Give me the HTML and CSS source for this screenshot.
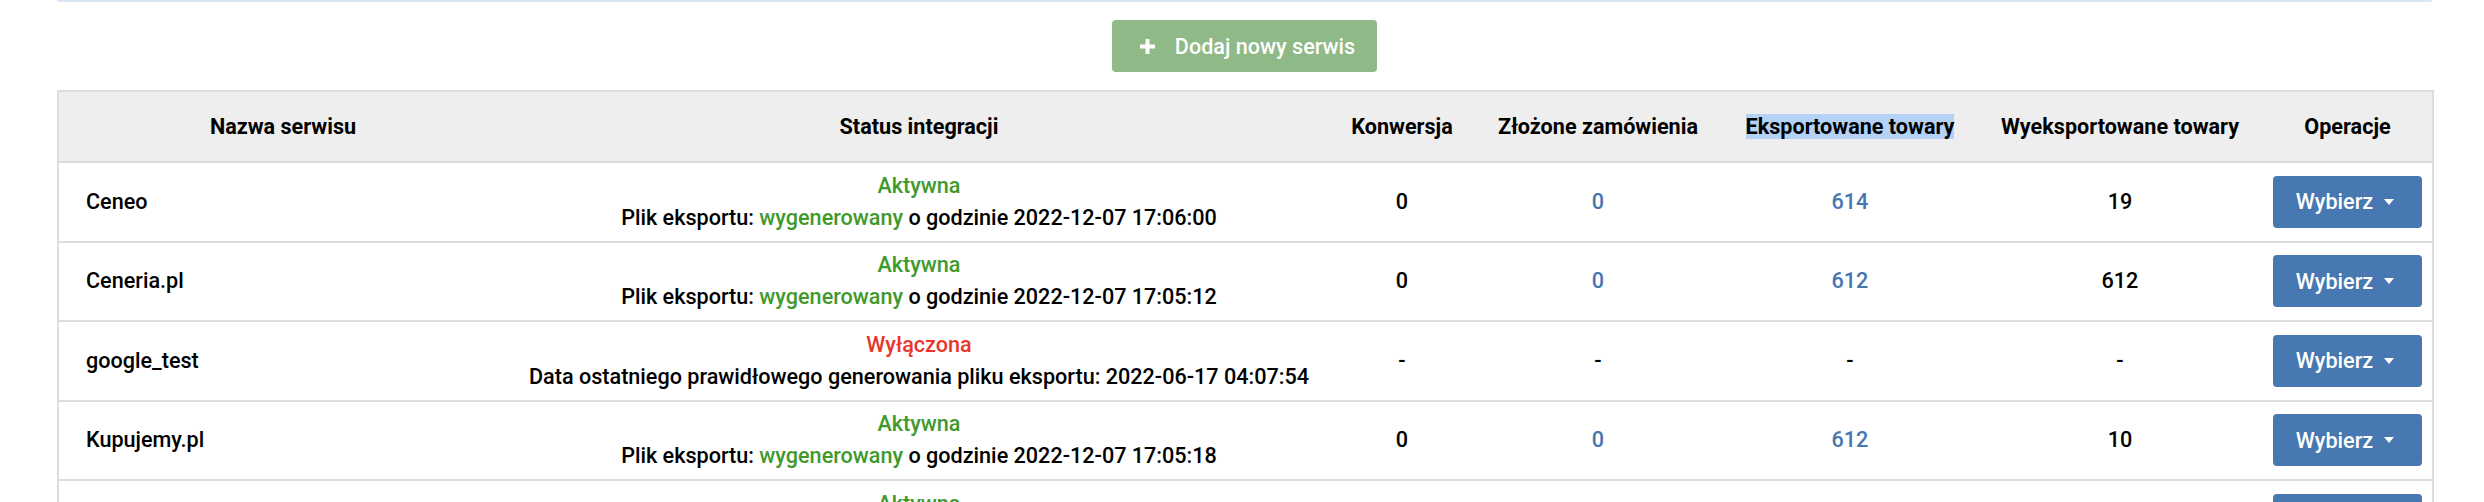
FILE: index.html
```html
<!DOCTYPE html>
<html lang="pl">
<head>
<meta charset="utf-8">
<title>Serwisy</title>
<link rel="stylesheet" href="styles.css">
</head>
<body>
<div class="page">
  <div class="panel-edge"></div>
  <div class="actions">
    <button class="btn-add" type="button">
      <svg class="plus" width="15" height="15" viewBox="0 0 15 15"><path d="M5.5 0h4v5.5H15v4H9.5V15h-4V9.5H0v-4h5.5z" fill="#fff"/></svg>
      <span>Dodaj nowy serwis</span>
    </button>
  </div>
  <table class="services">
    <colgroup>
      <col class="c-name"><col class="c-status"><col class="c-conv"><col class="c-orders"><col class="c-exp"><col class="c-done"><col class="c-ops">
    </colgroup>
    <thead>
      <tr>
        <th>Nazwa serwisu</th>
        <th>Status integracji</th>
        <th>Konwersja</th>
        <th>Złożone zamówienia</th>
        <th><span class="sel">Eksportowane towary</span></th>
        <th>Wyeksportowane towary</th>
        <th>Operacje</th>
      </tr>
    </thead>
    <tbody>
      <tr>
        <td class="name">Ceneo</td>
        <td class="status"><div class="ok">Aktywna</div><div>Plik eksportu: <span class="ok">wygenerowany</span> o godzinie 2022-12-07 17:06:00</div></td>
        <td>0</td><td class="link">0</td><td class="link">614</td><td>19</td>
        <td class="ops"><button class="btn-pick" type="button">Wybierz <span class="caret"></span></button></td>
      </tr>
      <tr>
        <td class="name">Ceneria.pl</td>
        <td class="status"><div class="ok">Aktywna</div><div>Plik eksportu: <span class="ok">wygenerowany</span> o godzinie 2022-12-07 17:05:12</div></td>
        <td>0</td><td class="link">0</td><td class="link">612</td><td>612</td>
        <td class="ops"><button class="btn-pick" type="button">Wybierz <span class="caret"></span></button></td>
      </tr>
      <tr>
        <td class="name">google_test</td>
        <td class="status"><div class="off">Wyłączona</div><div>Data ostatniego prawidłowego generowania pliku eksportu: 2022-06-17 04:07:54</div></td>
        <td>-</td><td>-</td><td>-</td><td>-</td>
        <td class="ops"><button class="btn-pick" type="button">Wybierz <span class="caret"></span></button></td>
      </tr>
      <tr>
        <td class="name">Kupujemy.pl</td>
        <td class="status"><div class="ok">Aktywna</div><div>Plik eksportu: <span class="ok">wygenerowany</span> o godzinie 2022-12-07 17:05:18</div></td>
        <td>0</td><td class="link">0</td><td class="link">612</td><td>10</td>
        <td class="ops"><button class="btn-pick" type="button">Wybierz <span class="caret"></span></button></td>
      </tr>
      <tr>
        <td class="name">Nokaut.pl</td>
        <td class="status"><div class="ok">Aktywna</div><div>Plik eksportu: <span class="ok">wygenerowany</span> o godzinie 2022-12-07 17:05:20</div></td>
        <td>0</td><td class="link">0</td><td class="link">612</td><td>12</td>
        <td class="ops"><button class="btn-pick" type="button">Wybierz <span class="caret"></span></button></td>
      </tr>
    </tbody>
  </table>
</div>
</body>
</html>
```
FILE: styles.css
```css
html, body {
  margin: 0;
  padding: 0;
  background: #fff;
}
body {
  font-family: Roboto, "Liberation Sans", Arial, sans-serif;
  font-size: 21.6px;
  color: #000;
  overflow: hidden;
}
.page {
  margin: 0 52px 0 57px;
}
.panel-edge {
  height: 2px;
  background: #d8e7f5;
  border-radius: 0 0 3px 3px;
}
.actions {
  display: flex;
  justify-content: center;
  padding-top: 18px;
}
.btn-add {
  display: flex;
  align-items: center;
  gap: 20px;
  height: 52px;
  padding: 0 22px 0 28px;
  border: 0;
  border-radius: 4px;
  background: #8fb986;
  color: #fff;
  font-family: inherit;
  font-size: 21.6px;
  font-weight: 500;
}
.plus { display: block; }
.services {
  margin-top: 18px;
  width: 100%;
  table-layout: fixed;
  border-collapse: separate;
  border-spacing: 0;
  border: 2px solid #ddd;
  border-bottom: 0;
}
.c-name { width: 448px; }
.c-status { width: 824px; }
.c-conv { width: 142px; }
.c-orders { width: 250px; }
.c-exp { width: 254px; }
.c-done { width: 286px; }
.c-ops { width: 169px; }
.services th {
  background: #eee;
  font-weight: 700;
  line-height: 32px;
  padding: 18.5px 0;
  border-bottom: 2px solid #ddd;
  text-align: center;
  white-space: nowrap;
}
.services td {
  line-height: 32px;
  padding: 6.75px 0;
  border-bottom: 2px solid #ddd;
  text-align: center;
  vertical-align: middle;
  font-weight: 500;
  white-space: nowrap;
}
.services td.name {
  text-align: left;
  padding-left: 27px;
}
.sel {
  background: #b4d1f6;
}
.ok { color: #3f9a2c; }
.off { color: #e8362b; }
.link { color: #4676b0; }
.services td.ops {
  padding: 0 10px;
}
.btn-pick {
  display: flex;
  align-items: center;
  justify-content: center;
  gap: 11px;
  width: 149px;
  height: 52px;
  margin: 0 auto;
  padding: 0 5px 0 0;
  border: 0;
  border-radius: 4px;
  background: #4778b2;
  color: #fff;
  font-family: inherit;
  font-size: 21.6px;
  font-weight: 500;
}
.caret {
  width: 0;
  height: 0;
  border-left: 5px solid transparent;
  border-right: 5px solid transparent;
  border-top: 6px solid #fff;
}
```
